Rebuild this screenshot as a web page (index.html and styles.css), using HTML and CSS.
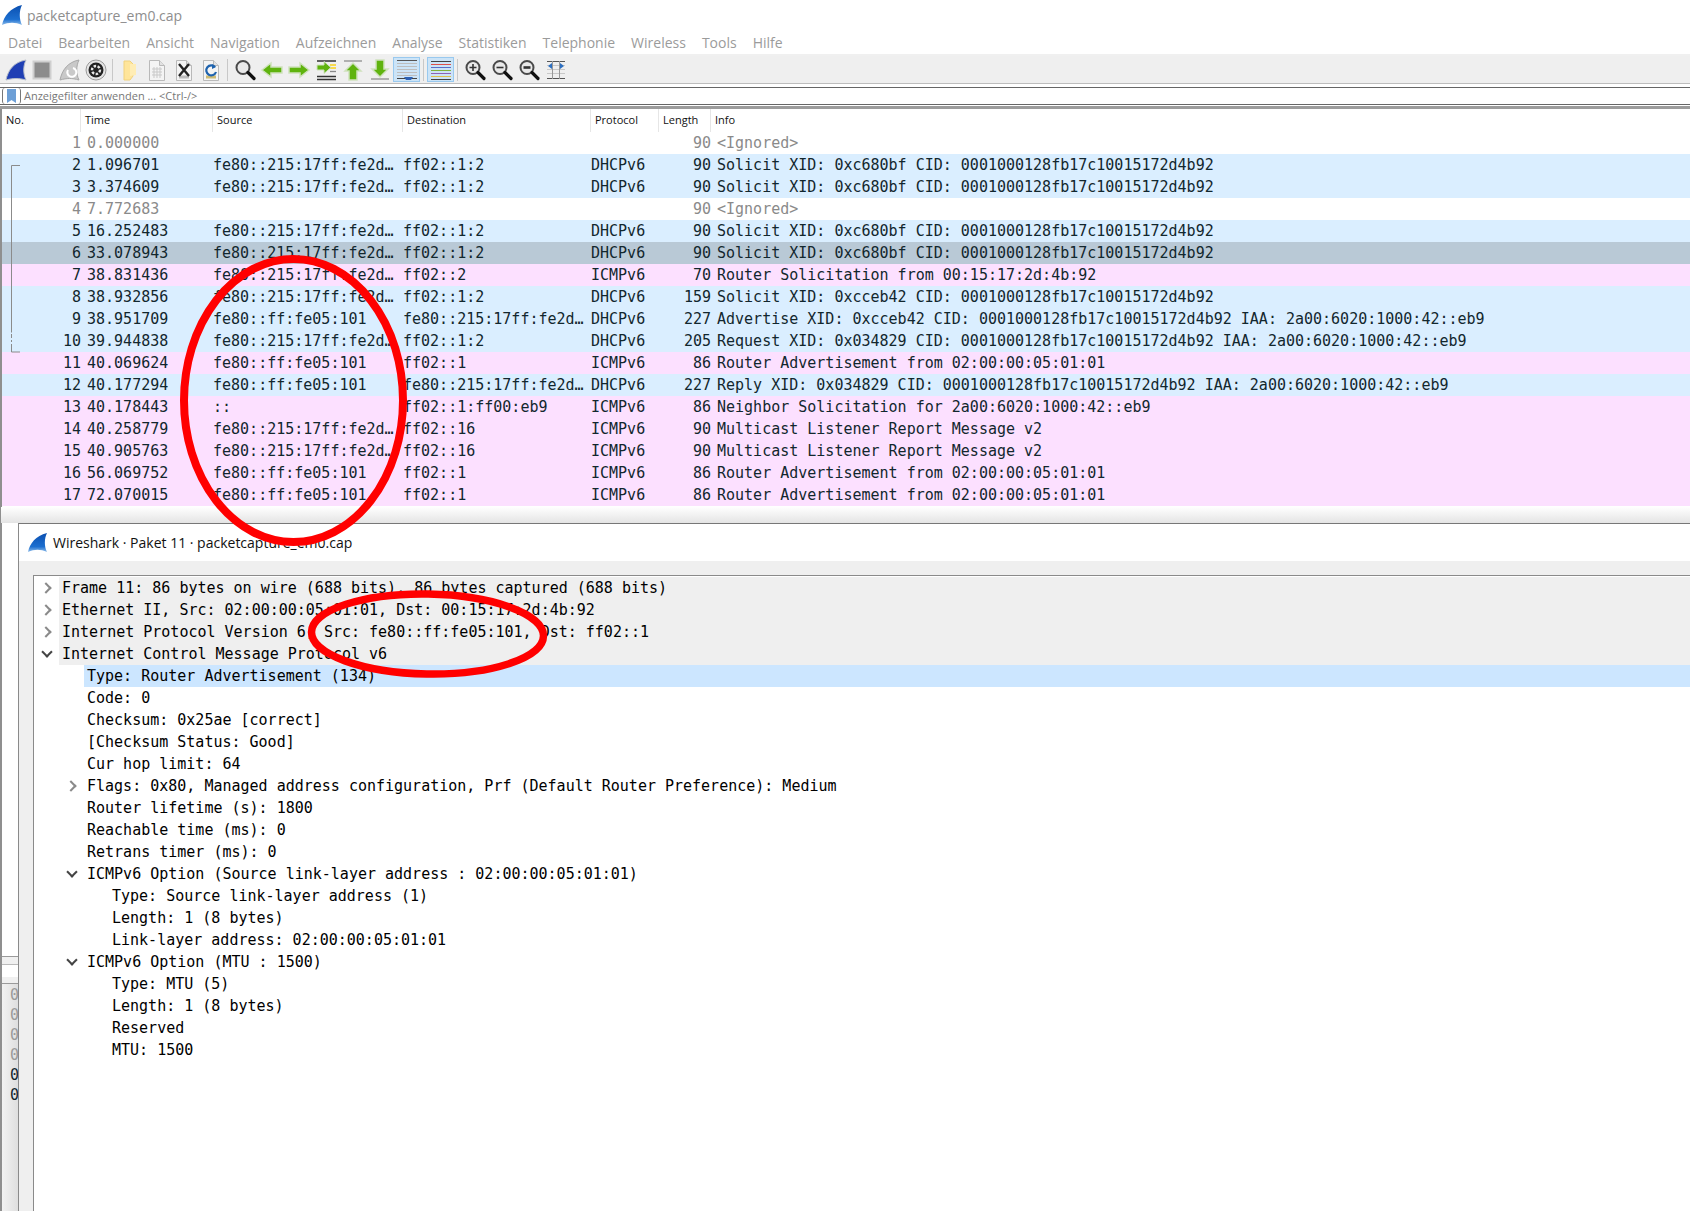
FILE: index.html
```html
<!DOCTYPE html>
<html>
<head>
    <meta charset="UTF-8">
    <title>packetcapture_em0.cap</title>
    <link rel="stylesheet" href="styles.css">
</head>
<body>
    <svg class="defs" width="0" height="0">
        <defs>
            <linearGradient id="finblue" x1="0" y1="0" x2="0" y2="1">
                <stop offset="0" stop-color="#0b4fb0"/>
                <stop offset="0.72" stop-color="#1c6fd0"/>
                <stop offset="1" stop-color="#8fbdea"/>
            </linearGradient>
            <symbol id="doc" viewBox="0 0 24 24">
                <path d="M4.5 2.5h10l5 5v15h-15z" fill="#f4f4f4" stroke="#b9b9b9"/>
                <path d="M14.5 2.5v5h5" fill="#e2e2e2" stroke="#b9b9b9"/>
            </symbol>
            <symbol id="lens" viewBox="0 0 24 24">
                <circle cx="10" cy="9.500" r="6.500" fill="#e9e9e9" stroke="#4a4a4a" stroke-width="2"/>
                <path d="M15 14.500l6 6" stroke="#111" stroke-width="3.200" stroke-linecap="round"/>
            </symbol>
        </defs>
    </svg>

    <div class="main">
        <div class="titlebar">
            <svg class="titlefin" viewBox="0 0 20 20"><path d="M0 20C2 11 8 3 20 0c-3 6-3 14 0 20C13 17 7 17 0 20z" fill="url(#finblue)"/></svg>
            <span>packetcapture_em0.cap</span>
        </div>
        <div class="menubar">
            <span>Datei</span><span>Bearbeiten</span><span>Ansicht</span><span>Navigation</span><span>Aufzeichnen</span><span>Analyse</span><span>Statistiken</span><span>Telephonie</span><span>Wireless</span><span>Tools</span><span>Hilfe</span>
        </div>
        <div class="toolbar">
            <span class="tool"><svg viewBox="0 0 24 24"><path d="M3 22C5 12 11 4 23 2c-3 6-3 14 0 20-7-2-13-2-20 0z" fill="#1f3fb4" stroke="#b5bcc9"/></svg></span>
            <span class="tool"><svg viewBox="0 0 24 24"><rect x="3.500" y="3.500" width="17" height="17" fill="#8c8c8c" stroke="#cfcfcf" stroke-width="2"/></svg></span>
            <span class="tool"><svg viewBox="0 0 24 24"><path d="M3 22C5 12 11 4 22 2c-3 6-3 14 0 20-7-2-12-2-19 0z" fill="#c9c9c9" stroke="#a8a8a8"/><path d="M11 12a4.500 4.500 0 1 0 5-2" fill="none" stroke="#fff" stroke-width="2"/></svg></span>
            <span class="tool"><svg viewBox="0 0 24 24"><circle cx="12" cy="12" r="10" fill="#e4e4e4" stroke="#9a9a9a"/><circle cx="12" cy="12" r="7.500" fill="#222"/><circle cx="12" cy="12" r="4" fill="none" stroke="#e8e8e8" stroke-width="2.400" stroke-dasharray="2.500 1.500"/></svg></span>
            <span class="sep"></span>
            <span class="tool"><svg viewBox="0 0 24 24"><path d="M6 3h6l3 3v12l-3 4H6z" fill="#ffe59a" stroke="#f1d27c"/><path d="M12 6h6v11l-6 1z" fill="#ffedb5"/></svg></span>
            <span class="tool"><svg viewBox="0 0 24 24"><use href="#doc"/><path d="M7 11h10M7 14h10M7 17h10M9 9v11M12 9v11M15 9v11" stroke="#c9c9c9"/></svg></span>
            <span class="tool"><svg viewBox="0 0 24 24"><use href="#doc"/><path d="M7 19h10" stroke="#bbb" stroke-width="3"/><path d="M7 6l10 12M17 6L7 18" stroke="#222" stroke-width="2.400"/></svg></span>
            <span class="tool"><svg viewBox="0 0 24 24"><use href="#doc"/><path d="M7 19h10" stroke="#cdbb74" stroke-width="3"/><path d="M16 9a5 5 0 1 0 1 5" fill="none" stroke="#1e62ad" stroke-width="2.200"/><path d="M13 6l4 3-4 2z" fill="#1e62ad"/></svg></span>
            <span class="sep"></span>
            <span class="tool"><svg viewBox="0 0 24 24"><use href="#lens"/></svg></span>
            <span class="tool"><svg viewBox="0 0 24 24"><path d="M2 12l9-7v4h11v6H11v4z" fill="#5fb30e" stroke="#cfe2bd" stroke-width="1.500"/></svg></span>
            <span class="tool"><svg viewBox="0 0 24 24"><path d="M22 12l-9-7v4H2v6h11v4z" fill="#5fb30e" stroke="#cfe2bd" stroke-width="1.500"/></svg></span>
            <span class="tool"><svg viewBox="0 0 24 24"><path d="M3 3h19M3 18.500h19M3 21.500h19" stroke="#333" stroke-width="1.300"/><path d="M16 7h6M16 10h6" stroke="#f7d94c" stroke-width="2"/><path d="M16 13.500h6" stroke="#888" stroke-width="1.300"/><path d="M17 9.500l-7-6v3.500H3v5h7v3.500z" fill="#5fb30e" stroke="#cfe2bd"/></svg></span>
            <span class="tool"><svg viewBox="0 0 24 24"><path d="M3 3h18" stroke="#b0b0b0" stroke-width="2"/><path d="M12 5l8 8h-4v9H8v-9H4z" fill="#5fb30e" stroke="#cfe2bd" stroke-width="1.500"/></svg></span>
            <span class="tool"><svg viewBox="0 0 24 24"><path d="M3 21h18" stroke="#b0b0b0" stroke-width="2"/><path d="M12 19l8-8h-4V2H8v9H4z" fill="#5fb30e" stroke="#cfe2bd" stroke-width="1.500"/></svg></span>
            <span class="tool on"><svg viewBox="0 0 24 24"><path d="M2 2.500h20" stroke="#555"/><path d="M2 5.500h20M2 8.500h20M2 11.500h20M2 14.500h20M2 17.500h20" stroke="#bdbdbd"/><path d="M2 20.500h20" stroke="#444"/><path d="M9 19h9l-2 3h-5z" fill="#2d62b5"/></svg></span>
            <span class="sep"></span>
            <span class="tool on"><svg viewBox="0 0 24 24"><path d="M2 3.500h20" stroke="#444"/><path d="M2 6.500h20" stroke="#e0504a"/><path d="M2 9.500h20" stroke="#5a6fc9"/><path d="M2 12.500h20" stroke="#7fb23f"/><path d="M2 15.500h20" stroke="#8e63b5"/><path d="M2 18.500h20" stroke="#e0c14d"/><path d="M2 21.500h20" stroke="#444"/></svg></span>
            <span class="sep"></span>
            <span class="tool"><svg viewBox="0 0 24 24"><use href="#lens"/><path d="M6.500 9.500h7M10 6v7" stroke="#333" stroke-width="1.600"/></svg></span>
            <span class="tool"><svg viewBox="0 0 24 24"><use href="#lens"/><path d="M6.500 9.500h7" stroke="#333" stroke-width="1.600"/></svg></span>
            <span class="tool"><svg viewBox="0 0 24 24"><use href="#lens"/><path d="M6.500 9.500h7" stroke="#333" stroke-width="2.600"/></svg></span>
            <span class="tool"><svg viewBox="0 0 24 24"><path d="M3 3.500h18M3 20.500h18" stroke="#555"/><path d="M3 7.500h18M3 11.500h18M3 15.500h18" stroke="#c8c8c8"/><path d="M8.500 3v18M15.500 3v18" stroke="#999"/><path d="M4 8l4-3v6zM20 8l-4-3v6z" fill="#2d6fc0"/></svg></span>
        </div>
        <div class="filterbar">
            <div class="filterbox">
                <span class="bookmark"><svg viewBox="0 0 10 14"><path d="M0 0h9v14l-4.500-3L0 14z" fill="#6d9fd6"/></svg></span>
                <span class="filtertext">Anzeigefilter anwenden ... &lt;Ctrl-/&gt;</span>
            </div>
        </div>

        <div class="packets">
            <div class="pk-head">
                <span class="c-no">No.</span><span class="c-time">Time</span><span class="c-src">Source</span><span class="c-dst">Destination</span><span class="c-proto">Protocol</span><span class="c-len">Length</span><span class="c-info">Info</span>
            </div>
            <div class="pk-list">
                <svg class="conv" width="24" height="374" viewBox="0 0 24 374">
                    <path d="M20 11.500h-8.500v167M11.500 180v4M11.500 186v2M11.500 190v8h8.500" fill="none" stroke="#8b8b8b"/>
                </svg>
                <div class="pk ign"><span class="no">1</span><span class="time">0.000000</span><span class="src"></span><span class="dst"></span><span class="proto"></span><span class="len">90</span><span class="info">&lt;Ignored&gt;</span></div>
                <div class="pk udp"><span class="no">2</span><span class="time">1.096701</span><span class="src">fe80::215:17ff:fe2d…</span><span class="dst">ff02::1:2</span><span class="proto">DHCPv6</span><span class="len">90</span><span class="info">Solicit XID: 0xc680bf CID: 0001000128fb17c10015172d4b92</span></div>
                <div class="pk udp"><span class="no">3</span><span class="time">3.374609</span><span class="src">fe80::215:17ff:fe2d…</span><span class="dst">ff02::1:2</span><span class="proto">DHCPv6</span><span class="len">90</span><span class="info">Solicit XID: 0xc680bf CID: 0001000128fb17c10015172d4b92</span></div>
                <div class="pk ign"><span class="no">4</span><span class="time">7.772683</span><span class="src"></span><span class="dst"></span><span class="proto"></span><span class="len">90</span><span class="info">&lt;Ignored&gt;</span></div>
                <div class="pk udp"><span class="no">5</span><span class="time">16.252483</span><span class="src">fe80::215:17ff:fe2d…</span><span class="dst">ff02::1:2</span><span class="proto">DHCPv6</span><span class="len">90</span><span class="info">Solicit XID: 0xc680bf CID: 0001000128fb17c10015172d4b92</span></div>
                <div class="pk sel"><span class="no">6</span><span class="time">33.078943</span><span class="src">fe80::215:17ff:fe2d…</span><span class="dst">ff02::1:2</span><span class="proto">DHCPv6</span><span class="len">90</span><span class="info">Solicit XID: 0xc680bf CID: 0001000128fb17c10015172d4b92</span></div>
                <div class="pk icmp"><span class="no">7</span><span class="time">38.831436</span><span class="src">fe80::215:17ff:fe2d…</span><span class="dst">ff02::2</span><span class="proto">ICMPv6</span><span class="len">70</span><span class="info">Router Solicitation from 00:15:17:2d:4b:92</span></div>
                <div class="pk udp"><span class="no">8</span><span class="time">38.932856</span><span class="src">fe80::215:17ff:fe2d…</span><span class="dst">ff02::1:2</span><span class="proto">DHCPv6</span><span class="len">159</span><span class="info">Solicit XID: 0xcceb42 CID: 0001000128fb17c10015172d4b92</span></div>
                <div class="pk udp"><span class="no">9</span><span class="time">38.951709</span><span class="src">fe80::ff:fe05:101</span><span class="dst">fe80::215:17ff:fe2d…</span><span class="proto">DHCPv6</span><span class="len">227</span><span class="info">Advertise XID: 0xcceb42 CID: 0001000128fb17c10015172d4b92 IAA: 2a00:6020:1000:42::eb9</span></div>
                <div class="pk udp"><span class="no">10</span><span class="time">39.944838</span><span class="src">fe80::215:17ff:fe2d…</span><span class="dst">ff02::1:2</span><span class="proto">DHCPv6</span><span class="len">205</span><span class="info">Request XID: 0x034829 CID: 0001000128fb17c10015172d4b92 IAA: 2a00:6020:1000:42::eb9</span></div>
                <div class="pk icmp"><span class="no">11</span><span class="time">40.069624</span><span class="src">fe80::ff:fe05:101</span><span class="dst">ff02::1</span><span class="proto">ICMPv6</span><span class="len">86</span><span class="info">Router Advertisement from 02:00:00:05:01:01</span></div>
                <div class="pk udp"><span class="no">12</span><span class="time">40.177294</span><span class="src">fe80::ff:fe05:101</span><span class="dst">fe80::215:17ff:fe2d…</span><span class="proto">DHCPv6</span><span class="len">227</span><span class="info">Reply XID: 0x034829 CID: 0001000128fb17c10015172d4b92 IAA: 2a00:6020:1000:42::eb9</span></div>
                <div class="pk icmp"><span class="no">13</span><span class="time">40.178443</span><span class="src">::</span><span class="dst">ff02::1:ff00:eb9</span><span class="proto">ICMPv6</span><span class="len">86</span><span class="info">Neighbor Solicitation for 2a00:6020:1000:42::eb9</span></div>
                <div class="pk icmp"><span class="no">14</span><span class="time">40.258779</span><span class="src">fe80::215:17ff:fe2d…</span><span class="dst">ff02::16</span><span class="proto">ICMPv6</span><span class="len">90</span><span class="info">Multicast Listener Report Message v2</span></div>
                <div class="pk icmp"><span class="no">15</span><span class="time">40.905763</span><span class="src">fe80::215:17ff:fe2d…</span><span class="dst">ff02::16</span><span class="proto">ICMPv6</span><span class="len">90</span><span class="info">Multicast Listener Report Message v2</span></div>
                <div class="pk icmp"><span class="no">16</span><span class="time">56.069752</span><span class="src">fe80::ff:fe05:101</span><span class="dst">ff02::1</span><span class="proto">ICMPv6</span><span class="len">86</span><span class="info">Router Advertisement from 02:00:00:05:01:01</span></div>
                <div class="pk icmp"><span class="no">17</span><span class="time">72.070015</span><span class="src">fe80::ff:fe05:101</span><span class="dst">ff02::1</span><span class="proto">ICMPv6</span><span class="len">86</span><span class="info">Router Advertisement from 02:00:00:05:01:01</span></div>
            </div>
        </div>

        <div class="lower">
            <div class="lower-top"></div>
            <div class="split">
                <div class="splitbox"><svg width="8" height="6" viewBox="0 0 8 6"><path d="M0 0l7 6" stroke="#b8b8b8" stroke-width="1.500"/></svg></div>
            </div>
            <div class="hexpane">
                <div class="dim">0</div>
                <div class="dim">0</div>
                <div class="dim">0</div>
                <div class="dim">0</div>
                <div>0</div>
                <div>0</div>
            </div>
        </div>
    </div>

    <div class="pktwin">
        <div class="win-title">
            <svg class="winfin" viewBox="0 0 20 20"><path d="M0 20C2 11 8 3 20 0c-3 6-3 14 0 20C13 17 7 17 0 20z" fill="url(#finblue)"/></svg>
            <span>Wireshark · Paket 11 · packetcapture_em0.cap</span>
        </div>
        <div class="win-body">
            <div class="tree">
                <div class="node lvl0 parent closed"><i class="twist"></i><span class="label">Frame 11: 86 bytes on wire (688 bits), 86 bytes captured (688 bits)</span></div>
                <div class="node lvl0 parent closed"><i class="twist"></i><span class="label">Ethernet II, Src: 02:00:00:05:01:01, Dst: 00:15:17:2d:4b:92</span></div>
                <div class="node lvl0 parent closed"><i class="twist"></i><span class="label">Internet Protocol Version 6, Src: fe80::ff:fe05:101, Dst: ff02::1</span></div>
                <div class="node lvl0 parent open"><i class="twist"></i><span class="label">Internet Control Message Protocol v6</span></div>
                <div class="node lvl1 picked"><i class="twist"></i><span class="label">Type: Router Advertisement (134)</span></div>
                <div class="node lvl1"><i class="twist"></i><span class="label">Code: 0</span></div>
                <div class="node lvl1"><i class="twist"></i><span class="label">Checksum: 0x25ae [correct]</span></div>
                <div class="node lvl1"><i class="twist"></i><span class="label">[Checksum Status: Good]</span></div>
                <div class="node lvl1"><i class="twist"></i><span class="label">Cur hop limit: 64</span></div>
                <div class="node lvl1 closed"><i class="twist"></i><span class="label">Flags: 0x80, Managed address configuration, Prf (Default Router Preference): Medium</span></div>
                <div class="node lvl1"><i class="twist"></i><span class="label">Router lifetime (s): 1800</span></div>
                <div class="node lvl1"><i class="twist"></i><span class="label">Reachable time (ms): 0</span></div>
                <div class="node lvl1"><i class="twist"></i><span class="label">Retrans timer (ms): 0</span></div>
                <div class="node lvl1 open"><i class="twist"></i><span class="label">ICMPv6 Option (Source link-layer address : 02:00:00:05:01:01)</span></div>
                <div class="node lvl2"><i class="twist"></i><span class="label">Type: Source link-layer address (1)</span></div>
                <div class="node lvl2"><i class="twist"></i><span class="label">Length: 1 (8 bytes)</span></div>
                <div class="node lvl2"><i class="twist"></i><span class="label">Link-layer address: 02:00:00:05:01:01</span></div>
                <div class="node lvl1 open"><i class="twist"></i><span class="label">ICMPv6 Option (MTU : 1500)</span></div>
                <div class="node lvl2"><i class="twist"></i><span class="label">Type: MTU (5)</span></div>
                <div class="node lvl2"><i class="twist"></i><span class="label">Length: 1 (8 bytes)</span></div>
                <div class="node lvl2"><i class="twist"></i><span class="label">Reserved</span></div>
                <div class="node lvl2"><i class="twist"></i><span class="label">MTU: 1500</span></div>
            </div>
        </div>
    </div>

    <!-- red marks drawn on top of the screenshot -->
    <svg class="marks" width="1690" height="1211" viewBox="0 0 1690 1211">
        <ellipse cx="293.500" cy="400.500" rx="109.500" ry="141.500" fill="none" stroke="#ff0000" stroke-width="8"/>
        <ellipse cx="427.500" cy="634" rx="116" ry="40" fill="none" stroke="#ff0000" stroke-width="7.500" transform="rotate(1 427 634)"/>
    </svg>
</body>
</html>
```

FILE: styles.css
```css
html,
body {
    height: 100%;
}
body {
    position: relative;
    overflow: hidden;
    margin: 0;
    background: #fff;
    font-family: "Open Sans", sans-serif;
}
.defs {
    position: absolute;
}
.main {
    display: flex;
    flex-direction: column;
    height: 1211px;
}

/* top of the main window */
.titlebar {
    display: flex;
    align-items: center;
    height: 30px;
    padding-left: 2px;
    font-size: 14px;
    color: #8e8e8e;
}
.titlefin {
    width: 20px;
    height: 20px;
    margin-right: 5px;
}
.menubar {
    display: flex;
    align-items: center;
    height: 25px;
    padding-left: 8px;
    border-bottom: 1px solid #f0f0f0;
    box-sizing: border-box;
    font-size: 14px;
    color: #9b9b9b;
}
.menubar span {
    margin-right: 16px;
}
.toolbar {
    display: flex;
    align-items: center;
    height: 29px;
    padding-left: 1px;
    border-top: 1px solid #f0f0f0;
    border-bottom: 1px solid #bdbdbd;
    box-sizing: border-box;
    background: #efefef;
}
.tool {
    display: flex;
    align-items: center;
    justify-content: center;
    box-sizing: border-box;
    width: 27px;
    height: 25px;
}
.tool svg {
    width: 24px;
    height: 24px;
}
.tool.on {
    background: #cce4f7;
    border: 1px solid #99c9ef;
}
.sep {
    width: 1px;
    height: 22px;
    margin: 0 3px;
    background: #c8c8c8;
}
.filterbar {
    height: 24px;
    padding-top: 3px;
    box-sizing: border-box;
    border-bottom: 3px solid #9c9c9c;
    height: 25px;
}
.filterbox {
    display: flex;
    height: 18px;
    box-sizing: border-box;
    border-top: 1px solid #666;
    border-bottom: 1px solid #666;
    background: #fff;
}
.bookmark {
    display: flex;
    align-items: center;
    justify-content: center;
    box-sizing: border-box;
    width: 19px;
    margin-left: 2px;
    border: 1px solid #777;
    border-width: 0 1px 0 1px;
    border-radius: 3px;
}
.bookmark svg {
    width: 10px;
    height: 14px;
}
.filtertext {
    padding-left: 3px;
    font-size: 11px;
    line-height: 16px;
    color: #777;
}

/* packet list */
.packets {
    position: relative;
    border-left: 2px solid #8f8f8f;
}
.pk-head,
.pk {
    display: grid;
    grid-template-columns: 79px 132px 190px 188px 68px 52px 1fr;
    height: 22px;
    white-space: nowrap;
}
.pk-head {
    height: 23px;
    font-size: 11px;
    line-height: 22px;
    color: #111;
}
.pk-head span {
    padding-left: 4px;
    border-right: 1px solid #e6e6e6;
}
.pk-head .c-info {
    border-right: none;
}
.pk-head .c-time,
.pk-head .c-src,
.pk-head .c-dst {
    padding-left: 4px;
}
.pk-list {
    position: relative;
}
.conv {
    position: absolute;
    left: -2px;
    top: 22px;
}
.pk {
    font-family: "DejaVu Sans Mono", monospace;
    font-size: 15px;
    line-height: 22px;
    color: #12272e;
}
.pk .no,
.pk .len {
    text-align: right;
}
.pk .time,
.pk .info {
    padding-left: 6px;
}
.udp {
    background: #daeeff;
}
.icmp {
    background: #fce0ff;
}
.sel {
    background: #b9c9d6;
}
.ign {
    color: #8a8a8a;
}

/* whatever of the main window shows left of the packet window */
.lower {
    display: flex;
    flex: 1;
    flex-direction: column;
    border-left: 2px solid #8f8f8f;
}
.lower-top {
    flex: 1;
    background: linear-gradient(#fff, #fff 450px);
    border-bottom: 1px solid #9a9a9a;
}
.split {
    height: 26px;
    box-sizing: border-box;
    padding-top: 7px;
    background: #f0f0f0;
}
.splitbox {
    display: flex;
    justify-content: flex-end;
    align-items: flex-end;
    box-sizing: border-box;
    height: 13px;
    padding-right: 1px;
    border-top: 1px solid #bbb;
    background: #fff;
}
.hexpane {
    height: 228px;
    box-sizing: border-box;
    padding: 1px 0 0 8px;
    border-top: 1px solid #9a9a9a;
    background: linear-gradient(90deg, #f2f2f2, #dcdcdc 18px);
    font-family: "DejaVu Sans Mono", monospace;
    font-size: 15px;
    line-height: 20px;
    color: #12272e;
}
.hexpane .dim {
    color: #9a9a9a;
}

/* the packet window that lies over the main window */
.pktwin {
    position: absolute;
    left: 18px;
    top: 523px;
    right: 0;
    bottom: 0;
    border-top: 1px solid #777;
    border-left: 1px solid #8a8a8a;
    background: #efefef;
}
.pktwin::before {
    content: "";
    position: absolute;
    left: -18px;
    right: 0;
    top: -17px;
    height: 16px;
    background: linear-gradient(#fff, #e4e4e4);
}
.win-title {
    display: flex;
    align-items: center;
    height: 37px;
    padding-left: 9px;
    background: #fff;
    font-size: 14px;
    color: #111;
}
.winfin {
    width: 19px;
    height: 19px;
    margin-right: 6px;
}
.win-body {
    height: 100%;
    padding: 14px 0 0 14px;
}
.tree {
    height: 100%;
    padding-top: 1px;
    border-top: 1px solid #8a8a8a;
    border-left: 1px solid #8a8a8a;
    background: #fff;
    font-family: "DejaVu Sans Mono", monospace;
    font-size: 15px;
    line-height: 22px;
    color: #000;
}
.node {
    display: flex;
    height: 22px;
    white-space: nowrap;
}
.lvl1 {
    padding-left: 25px;
}
.lvl2 {
    padding-left: 50px;
}
.twist {
    position: relative;
    flex: none;
    width: 25px;
}
.closed .twist::before,
.open .twist::before {
    content: "";
    position: absolute;
    left: 8px;
    top: 7px;
    width: 6px;
    height: 6px;
    border-top: 2px solid #8a8a8a;
    border-right: 2px solid #8a8a8a;
    transform: rotate(45deg);
}
.open .twist::before {
    left: 9px;
    top: 5px;
    border-color: #444;
    transform: rotate(135deg);
}
.label {
    flex: 1;
    padding-left: 3px;
}
.parent .label {
    background: #efefef;
}
.picked .label {
    background: #cce6ff;
}
.marks {
    position: absolute;
    left: 0;
    top: 0;
    pointer-events: none;
}
```
